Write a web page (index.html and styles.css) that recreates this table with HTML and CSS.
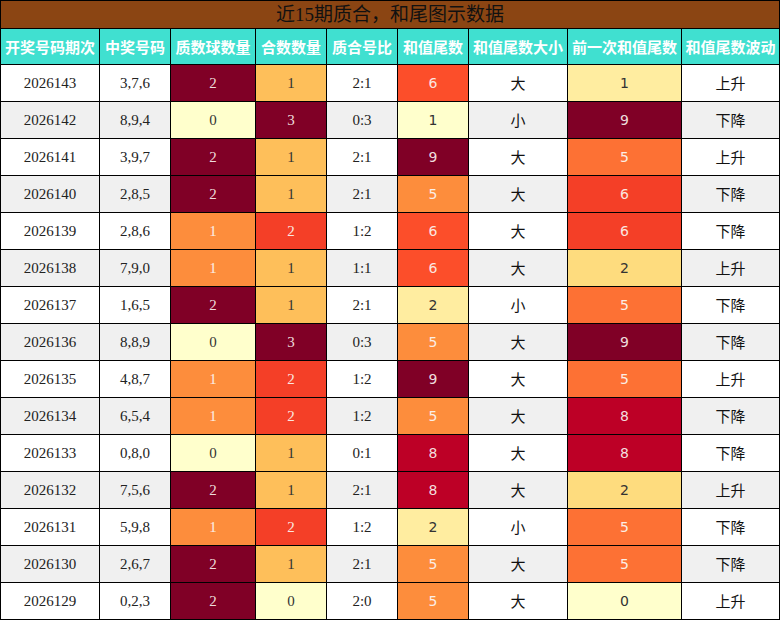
FILE: index.html
```html
<!DOCTYPE html>
<html lang="zh">
<head>
<meta charset="utf-8">
<link rel="stylesheet" href="styles.css">
</head>
<body>
<table class="chart">
<colgroup>
<col class="w99"><col class="w71"><col class="w85"><col class="w71"><col class="w71"><col class="w71"><col class="w99"><col class="w114"><col class="w98">
</colgroup>
<thead>
<tr class="title"><th colspan="9">近15期质合，和尾图示数据</th></tr>
<tr class="head">
<th>开奖号码期次</th><th>中奖号码</th><th>质数球数量</th><th>合数数量</th><th>质合号比</th><th>和值尾数</th><th>和值尾数大小</th><th>前一次和值尾数</th><th>和值尾数波动</th>
</tr>
</thead>
<tbody>
<tr><td>2026143</td><td>3,7,6</td><td class="c9">2</td><td class="c3">1</td><td>2:1</td><td class="s c6">6</td><td class="k">大</td><td class="s c1">1</td><td class="k">上升</td></tr>
<tr class="alt"><td>2026142</td><td>8,9,4</td><td class="c0">0</td><td class="c9">3</td><td>0:3</td><td class="s c0">1</td><td class="k">小</td><td class="s c9">9</td><td class="k">下降</td></tr>
<tr><td>2026141</td><td>3,9,7</td><td class="c9">2</td><td class="c3">1</td><td>2:1</td><td class="s c9">9</td><td class="k">大</td><td class="s c5">5</td><td class="k">上升</td></tr>
<tr class="alt"><td>2026140</td><td>2,8,5</td><td class="c9">2</td><td class="c3">1</td><td>2:1</td><td class="s c4">5</td><td class="k">大</td><td class="s c7">6</td><td class="k">下降</td></tr>
<tr><td>2026139</td><td>2,8,6</td><td class="c4">1</td><td class="c7">2</td><td>1:2</td><td class="s c6">6</td><td class="k">大</td><td class="s c7">6</td><td class="k">下降</td></tr>
<tr class="alt"><td>2026138</td><td>7,9,0</td><td class="c4">1</td><td class="c3">1</td><td>1:1</td><td class="s c6">6</td><td class="k">大</td><td class="s c2">2</td><td class="k">上升</td></tr>
<tr><td>2026137</td><td>1,6,5</td><td class="c9">2</td><td class="c3">1</td><td>2:1</td><td class="s c1">2</td><td class="k">小</td><td class="s c5">5</td><td class="k">下降</td></tr>
<tr class="alt"><td>2026136</td><td>8,8,9</td><td class="c0">0</td><td class="c9">3</td><td>0:3</td><td class="s c4">5</td><td class="k">大</td><td class="s c9">9</td><td class="k">下降</td></tr>
<tr><td>2026135</td><td>4,8,7</td><td class="c4">1</td><td class="c7">2</td><td>1:2</td><td class="s c9">9</td><td class="k">大</td><td class="s c5">5</td><td class="k">上升</td></tr>
<tr class="alt"><td>2026134</td><td>6,5,4</td><td class="c4">1</td><td class="c7">2</td><td>1:2</td><td class="s c4">5</td><td class="k">大</td><td class="s c8">8</td><td class="k">下降</td></tr>
<tr><td>2026133</td><td>0,8,0</td><td class="c0">0</td><td class="c3">1</td><td>0:1</td><td class="s c8">8</td><td class="k">大</td><td class="s c8">8</td><td class="k">下降</td></tr>
<tr class="alt"><td>2026132</td><td>7,5,6</td><td class="c9">2</td><td class="c3">1</td><td>2:1</td><td class="s c8">8</td><td class="k">大</td><td class="s c2">2</td><td class="k">上升</td></tr>
<tr><td>2026131</td><td>5,9,8</td><td class="c4">1</td><td class="c7">2</td><td>1:2</td><td class="s c1">2</td><td class="k">小</td><td class="s c5">5</td><td class="k">下降</td></tr>
<tr class="alt"><td>2026130</td><td>2,6,7</td><td class="c9">2</td><td class="c3">1</td><td>2:1</td><td class="s c4">5</td><td class="k">大</td><td class="s c5">5</td><td class="k">下降</td></tr>
<tr><td>2026129</td><td>0,2,3</td><td class="c9">2</td><td class="c0">0</td><td>2:0</td><td class="s c4">5</td><td class="k">大</td><td class="s c0">0</td><td class="k">上升</td></tr>
</tbody>
</table>
</body>
</html>
```

FILE: styles.css
```css
html, body {
  margin: 0;
  padding: 0;
  background: #ffffff;
}

.chart {
  width: 780px;
  border-collapse: collapse;
  table-layout: fixed;
  font-family: "Liberation Serif", "Noto Sans CJK SC", serif;
  font-size: 15px;
  color: #222222;
}

.w99 { width: 99px; }
.w71 { width: 71px; }
.w85 { width: 85px; }
.w114 { width: 114px; }
.w98 { width: 98px; }

.chart th,
.chart td {
  border: 1px solid #000000;
  padding: 0;
  text-align: center;
  vertical-align: middle;
}

.title th {
  height: 27px;
  background: #8b4513;
  color: #111111;
  font-size: 19px;
  font-weight: normal;
  font-family: "Liberation Serif", "Noto Sans CJK SC", serif;
  line-height: 26px;
}

.head th {
  height: 35px;
  background: #40e0d0;
  color: #ffffff;
  font-family: "Noto Sans CJK SC", sans-serif;
  font-weight: bold;
  font-size: 15px;
  line-height: 20px;
}

.chart td {
  height: 36px;
  background: #ffffff;
  line-height: 20px;
}

.chart tr.alt td {
  background: #f0f0f0;
}

.chart td.s {
  font-family: "DejaVu Sans", sans-serif;
  font-size: 14px;
}

.chart td.k {
  font-family: "Noto Sans CJK SC", sans-serif;
  font-size: 15px;
  color: #111111;
}

.chart tr td.c0 { background: #ffffcc; color: #333333; }
.chart tr td.c1 { background: #ffeda0; color: #333333; }
.chart tr td.c2 { background: #fedc7e; color: #333333; }
.chart tr td.c3 { background: #febf5a; color: #333333; }
.chart tr td.c4 { background: #fd8d3c; color: #fbeee6; }
.chart tr td.c5 { background: #fd7134; color: #fbeee6; }
.chart tr td.c6 { background: #fc4e2a; color: #fbe6e0; }
.chart tr td.c7 { background: #f43f27; color: #fbe6e0; }
.chart tr td.c8 { background: #bd0026; color: #f3dede; }
.chart tr td.c9 { background: #800026; color: #eedcdc; }
```
